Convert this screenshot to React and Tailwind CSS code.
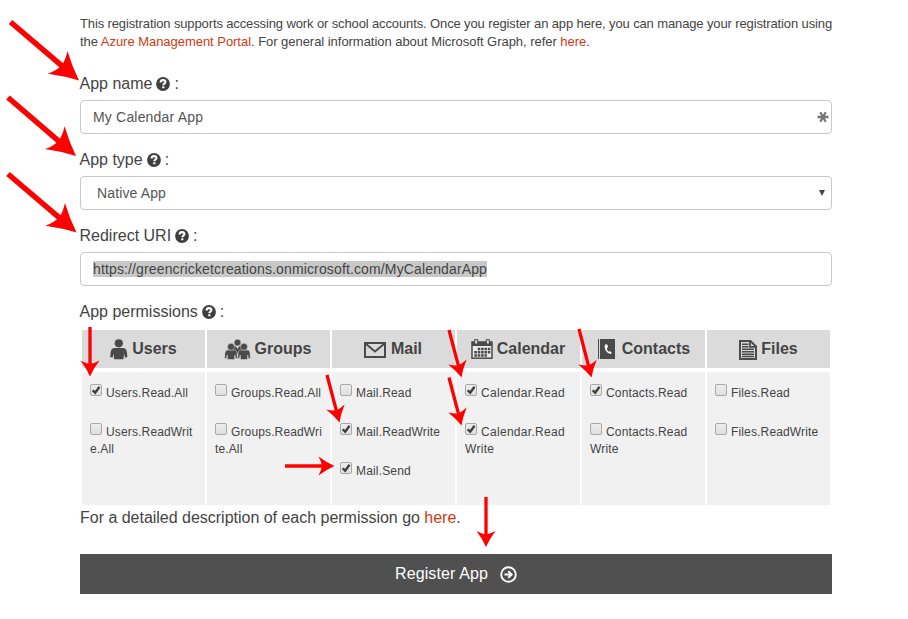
import React from "react";

const HelpIcon = () => (
  <svg viewBox="0 0 14 14" className="ml-1 mr-1 inline-block h-[14px] w-[14px] align-[-2px]">
    <circle cx="7" cy="7" r="6.9" fill="#3f3f3f" />
    <path d="M4.6 5.4C4.6 3.8 5.600 3.1 7 3.1s2.4.7 2.4 2c0 1.600-2.100 1.600-2.100 3.200" fill="none" stroke="#fff" strokeWidth="2.100" />
    <rect x="6.2" y="9.300" width="2.200" height="1.900" fill="#fff" />
  </svg>
);

const Label = ({ children }) => (
  <div className="flex h-[34px] items-center pt-[2px] text-[16px] leading-[32px] text-[#444]">
    <span className="-ml-[0.5px] whitespace-pre">{children}</span>
    <HelpIcon />
    <span>:</span>
  </div>
);

const UsersIcon = () => (
  <svg viewBox="0 0 18 21" className="mt-[1px] h-[21px] w-[18px]" fill="#4a4a4a">
    <circle cx="8.800" cy="4.300" r="4.100" />
    <path d="M4.600 9h8.400c2.200 0 3.600 1.500 3.900 4l.5 5-2.300.7-1.100-3.900-.5 5.500H4.100l-.5-5.500-1.100 3.900-2.300-.7.5-5C1 10.500 2.400 9 4.600 9z" />
  </svg>
);

const GroupsIcon = () => (
  <svg viewBox="0 0 27 21" className="h-[21px] w-[27px]" fill="#4a4a4a" stroke="#dbdbdb" strokeWidth=".5">
    <path d="M9.500 6.800h8c2 0 2.800 1.500 2.900 3.500l.3 4.200H6.400l.3-4.200c.1-2 .9-3.500 2.800-3.500z" />
    <path d="M11.300 6.500h4.400L13.500 10z" fill="#dbdbdb" stroke="none" />
    <circle cx="13.500" cy="3.600" r="3.400" />
    <path d="M3.800 11h6.400c1.600 0 2.600 1.200 2.800 3l.4 5.200-1.700.5-.9-3.700-.3 4.500H3.600l-.3-4.500-.8 3.700-1.900-.5.4-5.200c.2-1.800 1.200-3 2.800-3z" />
    <path d="M16.800 11h6.400c1.600 0 2.600 1.200 2.800 3l.4 5.200-1.900.5-.8-3.700-.3 4.500h-6.900l-.3-4.500-.8 3.700-1.700-.5.4-5.200c.2-1.800 1.200-3 2.700-3z" />
    <circle cx="7" cy="7.800" r="3.500" />
    <circle cx="20" cy="7.800" r="3.500" />
  </svg>
);

const MailIcon = () => (
  <svg viewBox="0 0 22 16" className="mt-[1px] h-[16px] w-[22px]" fill="none" stroke="#4a4a4a" strokeWidth="2">
    <rect x="1" y="1" width="20" height="14" />
    <path d="M2 2l9 7.500L20 2" />
  </svg>
);

const CalendarIcon = () => (
  <svg viewBox="0 0 22 20" className="h-[20px] w-[22px]">
    <rect x="1" y="3" width="20" height="16.200" fill="#ececec" stroke="#4a4a4a" strokeWidth="1.500" />
    <rect x="1" y="3" width="20" height="4" fill="#4a4a4a" />
    <rect x="3.700" y=".7" width="3" height="4.300" fill="#ddd" stroke="#4a4a4a" />
    <rect x="15.300" y=".7" width="3" height="4.300" fill="#ddd" stroke="#4a4a4a" />
    <g stroke="#4a4a4a" strokeWidth="2.500" strokeDasharray="2.600 .8">
      <path d="M6.700 10h12.600M3.300 13.300h16M3.300 16.600h12.600" />
    </g>
  </svg>
);

const ContactsIcon = () => (
  <svg viewBox="0 0 18 20" className="h-[20px] w-[18px]">
    <rect x="0" y="0" width="1" height="20" fill="#4a4a4a" />
    <rect x="2" y="0" width="15" height="20" fill="#4a4a4a" />
    <path d="M7 5.500c-1.200 4 1.200 8.500 5.700 9.500l1.100-1.300-2-1.700-1.200.7c-1.100-.8-1.800-2.200-1.800-3.600l1.200-.6-.6-2.900z" fill="#fff" />
  </svg>
);

const FilesIcon = () => (
  <svg viewBox="0 0 18 20" className="mt-[1px] h-[20px] w-[18px]">
    <path d="M1 1h10.500L17 6.500V19H1z" fill="#d8d8d8" stroke="#4a4a4a" strokeWidth="2" />
    <path d="M11 1v5.800h6" fill="none" stroke="#4a4a4a" strokeWidth="1.800" />
    <path d="M3 4.200h6.500M3 6.700h6.500M3 9.300h12M3 11.800h12M3 14.300h12M3 16.600h12" stroke="#4a4a4a" strokeWidth="1.500" />
  </svg>
);

const Checkbox = ({ checked }) => (
  <svg viewBox="0 0 13 13" className="mr-[3px] inline-block h-[13px] w-[13px] shrink-0">
    <defs>
      <linearGradient id="box" x1="0" y1="0" x2="0" y2="1">
        <stop offset="0" stopColor="#eeeeee" />
        <stop offset="1" stopColor="#dedede" />
      </linearGradient>
    </defs>
    <rect x=".5" y=".5" width="11" height="11" rx="1.500" fill="url(#box)" stroke="#a9a9a9" />
    {checked && <path d="M2.700 6.200l2.500 2.500L9.500 2.800" fill="none" stroke="#3c3c3c" strokeWidth="2.300" />}
  </svg>
);

const columns = [
  { title: "Users", icon: <UsersIcon />, head: "gap-[4px]", text: "tracking-[0.15px]", items: [["Users.Read.All", true], ["Users.ReadWrit|e.All", false]] },
  { title: "Groups", icon: <GroupsIcon />, head: "gap-[4px] pr-[2px]", text: "tracking-[0.13px]", items: [["Groups.Read.All", false], ["Groups.ReadWri|te.All", false]] },
  { title: "Mail", icon: <MailIcon />, head: "gap-[5px] pr-[1px]", text: "tracking-[0.17px]", items: [["Mail.Read", false], ["Mail.ReadWrite", true], ["Mail.Send", true]] },
  { title: "Calendar", icon: <CalendarIcon />, head: "gap-[4px] pr-[1px]", text: "tracking-[0.3px]", items: [["Calendar.Read", true], ["Calendar.Read|Write", true]] },
  { title: "Contacts", icon: <ContactsIcon />, head: "gap-[6px] pl-[1px]", text: "tracking-[0.15px]", items: [["Contacts.Read", true], ["Contacts.Read|Write", false]] },
  { title: "Files", icon: <FilesIcon />, head: "gap-[4px]", text: "tracking-[0.15px]", items: [["Files.Read", false], ["Files.ReadWrite", false]] },
];

const arrows = [
  { from: [10.500, 22], to: [79, 80.500], big: true },
  { from: [8, 97.500], to: [76, 156], big: true },
  { from: [8, 174], to: [76.500, 232.500], big: true },
  { from: [90, 327], to: [90, 376.500] },
  { from: [327, 375], to: [339.500, 422.500] },
  { from: [449, 330], to: [461.500, 377.500] },
  { from: [449, 377.500], to: [461.500, 425.500] },
  { from: [579, 329], to: [591.500, 377.500] },
  { from: [285, 466], to: [334.500, 466] },
  { from: [486, 497], to: [486, 547] },
];

const Arrow = ({ from, to, big }) => {
  const length = Math.hypot(to[0] - from[0], to[1] - from[1]);
  const angle = (Math.atan2(to[1] - from[1], to[0] - from[0]) * 180) / Math.PI;
  const head = big
    ? "M0 0Q-14 -6 -28 -15Q-23.500 -7 -23 0Q-23.500 7 -28 15Q-14 6 0 0z"
    : "M0 0Q-8 -3.500 -16 -9.500Q-13 -4 -12.500 0Q-13 4 -16 9.500Q-8 3.500 0 0z";
  return (
    <g transform={`translate(${to[0]} ${to[1]}) rotate(${angle})`}>
      <path d={`M${-length} 0H-12`} stroke="#f00" strokeWidth={big ? 5.5 : 3.3} />
      <path d={head} fill="#f00" />
    </g>
  );
};

export default function App() {
  return (
    <div className="relative h-[619px] w-[908px] overflow-hidden bg-white font-['Liberation_Sans',Arial,sans-serif] text-[#444]">
      <main className="ml-[80px] w-[752px] pt-[15px]">
        <p className="h-[51px] whitespace-nowrap text-[13px] leading-[18px]">
          <span className="block tracking-[-0.123px]">This registration supports accessing work or school accounts. Once you register an app here, you can manage your registration using</span>
          <span className="block tracking-[-0.038px]">
            the <a className="text-[#d03a12]">Azure Management Portal</a>. For general information about Microsoft Graph, refer <a className="text-[#d03a12]">here</a>.
          </span>
        </p>

        <Label>App name</Label>
        <div className="flex h-[34px] items-center justify-between rounded-[4px] border border-[#c8c8c8] pl-[12px] pr-[2px] text-[14px] text-[#555]">
          <span className="tracking-[0.18px]">My Calendar App</span>
          <svg viewBox="0 0 12 12" className="h-[12px] w-[12px]">
            <path d="M.5 6h11M3.300 1.300l5.400 9.400M8.700 1.300L3.300 10.700" stroke="#777" strokeWidth="2.300" />
          </svg>
        </div>

        <div className="pt-[8px]">
          <Label>App type</Label>
        </div>
        <div className="flex h-[34px] items-center justify-between rounded-[4px] border border-[#c8c8c8] pl-[16px] pr-[6px] text-[14px] text-[#555]">
          <span className="tracking-[0.13px]">Native App</span>
          <svg viewBox="0 0 6 6" className="h-[6px] w-[6px]">
            <path d="M0 0h6L3 6z" fill="#444" />
          </svg>
        </div>

        <div className="pt-[8px]">
          <Label>Redirect URI</Label>
        </div>
        <div className="flex h-[34px] items-center rounded-[4px] border border-[#c8c8c8] pl-[12px] text-[14px] text-[#444]">
          <span className="bg-[#c8c8c8] leading-[16px] tracking-[0.137px]">https://greencricketcreations.onmicrosoft.com/MyCalendarApp</span>
        </div>

        <div className="pt-[8px]">
          <Label>App permissions</Label>
        </div>
        <div className="ml-[2px] mt-[2px] grid w-[748px] grid-cols-6 gap-x-[2px]">
          {columns.map((column) => (
            <section key={column.title} className="flex flex-col gap-[4px]">
              <h2 className={`flex h-[38px] items-center justify-center bg-[#dbdbdb] text-[16px] font-bold ${column.head}`}>
                {column.icon}
                <span>{column.title}</span>
              </h2>
              <div className={`h-[133px] bg-[#f1f1f1] pl-[8px] pt-[12px] text-[12px] leading-[17px] ${column.text}`}>
                {column.items.map(([name, checked]) => (
                  <div key={name} className="h-[39px] whitespace-nowrap">
                    {name.split("|").map((line, i) => (
                      <div key={line} className="flex h-[17px]">
                        {i === 0 && <Checkbox checked={checked} />}
                        <span className="pt-[1px]">{line}</span>
                      </div>
                    ))}
                  </div>
                ))}
              </div>
            </section>
          ))}
        </div>

        <p className="h-[49px] text-[16px] leading-[26px] tracking-[-0.015px]">
          For a detailed description of each permission go <a className="text-[#d03a12]">here</a>.
        </p>
        <button className="flex h-[40px] w-full items-center justify-center gap-[12px] bg-[#505050] text-[16px] text-white">
          <span className="tracking-[0.12px]">Register App</span>
          <svg viewBox="0 0 17 17" className="mt-[1px] h-[17px] w-[17px]" fill="none" stroke="#fff">
            <circle cx="8.500" cy="8.500" r="7.300" strokeWidth="1.900" />
            <path d="M4.500 8.500h7M8.300 5.200l3.300 3.300-3.300 3.300" strokeWidth="2" />
          </svg>
        </button>
      </main>

      <svg viewBox="0 0 908 619" className="pointer-events-none absolute left-0 top-0 h-[619px] w-[908px]">
        {arrows.map((arrow, i) => (
          <Arrow key={i} {...arrow} />
        ))}
      </svg>
    </div>
  );
}
